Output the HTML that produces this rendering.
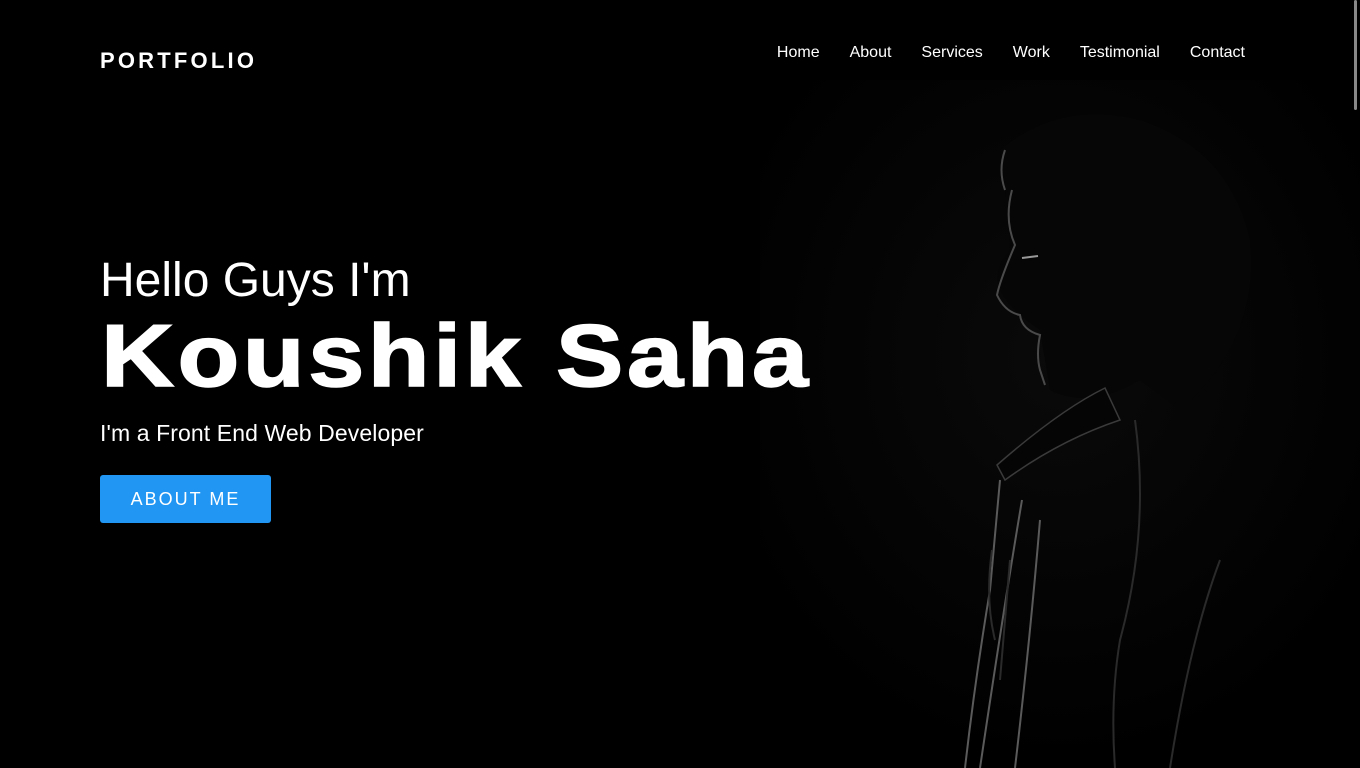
<!DOCTYPE html>
<html><head><meta charset="utf-8"><style>
html,body{margin:0;padding:0;background:#000;width:1360px;height:768px;overflow:hidden;font-family:"Liberation Sans",Arial,sans-serif;color:#fff}
.logo{position:absolute;left:100px;top:48px;font-size:22px;font-weight:bold;letter-spacing:3.2px}
nav{position:absolute;top:44px;right:115px;display:flex;gap:30px;font-size:16px}
.hello{position:absolute;left:100px;top:253px;font-size:48px;line-height:56px}
.name{position:absolute;left:101px;top:306px;font-size:88px;font-weight:900;line-height:100px;letter-spacing:3px;-webkit-text-stroke:1.5px #fff;white-space:nowrap;transform:scaleX(1.15);transform-origin:0 0}
.sub{position:absolute;left:100px;top:419px;font-size:23px;line-height:28px;letter-spacing:0.1px}
.btn{position:absolute;left:100px;top:475px;width:171px;height:48px;background:#2196f3;border-radius:3px;font-size:18px;letter-spacing:2px;line-height:48px;text-align:center}
.sb{position:absolute;right:3px;top:0;width:3px;height:110px;background:#888;border-radius:2px}
svg{position:absolute;left:760px;top:80px}
</style></head><body>
<svg width="600" height="688" viewBox="0 0 600 688">
<defs><radialGradient id="g" cx="0.5" cy="0.4" r="0.6"><stop offset="0" stop-color="#0a0a0a"/><stop offset="1" stop-color="#000"/></radialGradient></defs>
<rect width="600" height="688" fill="url(#g)"/>
<path d="M240 70 Q300 20 380 40 Q470 70 490 160 Q500 260 420 330 L380 300 Q330 330 290 310 L280 250 Q250 230 240 210 Q232 190 250 170 Q248 120 240 70Z" fill="#060606"/>
<path d="M245 70 Q238 90 245 110 M252 110 Q244 140 255 165 Q240 200 237 215 Q245 232 260 235 Q262 250 280 255 Q276 275 280 290 L285 305" stroke="#4a4a4a" stroke-width="2" fill="none"/>
<path d="M262 178 L278 176" stroke="#999" stroke-width="2"/>
<path d="M237 385 Q300 330 345 308 L360 340 Q300 360 245 400 Z" fill="#050505" stroke="#3a3a3a" stroke-width="1.5"/>
<path d="M240 400 L230 510 Q215 600 205 688 M262 420 Q245 520 220 688 M280 440 Q270 560 255 688" stroke="#5a5a5a" stroke-width="2" fill="none"/>
<path d="M232 470 Q225 520 235 560 M250 480 L240 600 M375 340 Q390 450 360 560 Q350 620 355 688 M460 480 Q430 560 410 688" stroke="#2a2a2a" stroke-width="2" fill="none"/>
</svg>
<div class="sb"></div>
<div class="logo">PORTFOLIO</div>
<nav><span>Home</span><span>About</span><span>Services</span><span>Work</span><span>Testimonial</span><span>Contact</span></nav>
<div class="hello">Hello Guys I'm</div>
<div class="name">Koushik Saha</div>
<div class="sub">I'm a Front End Web Developer</div>
<div class="btn">ABOUT ME</div>
</body></html>
